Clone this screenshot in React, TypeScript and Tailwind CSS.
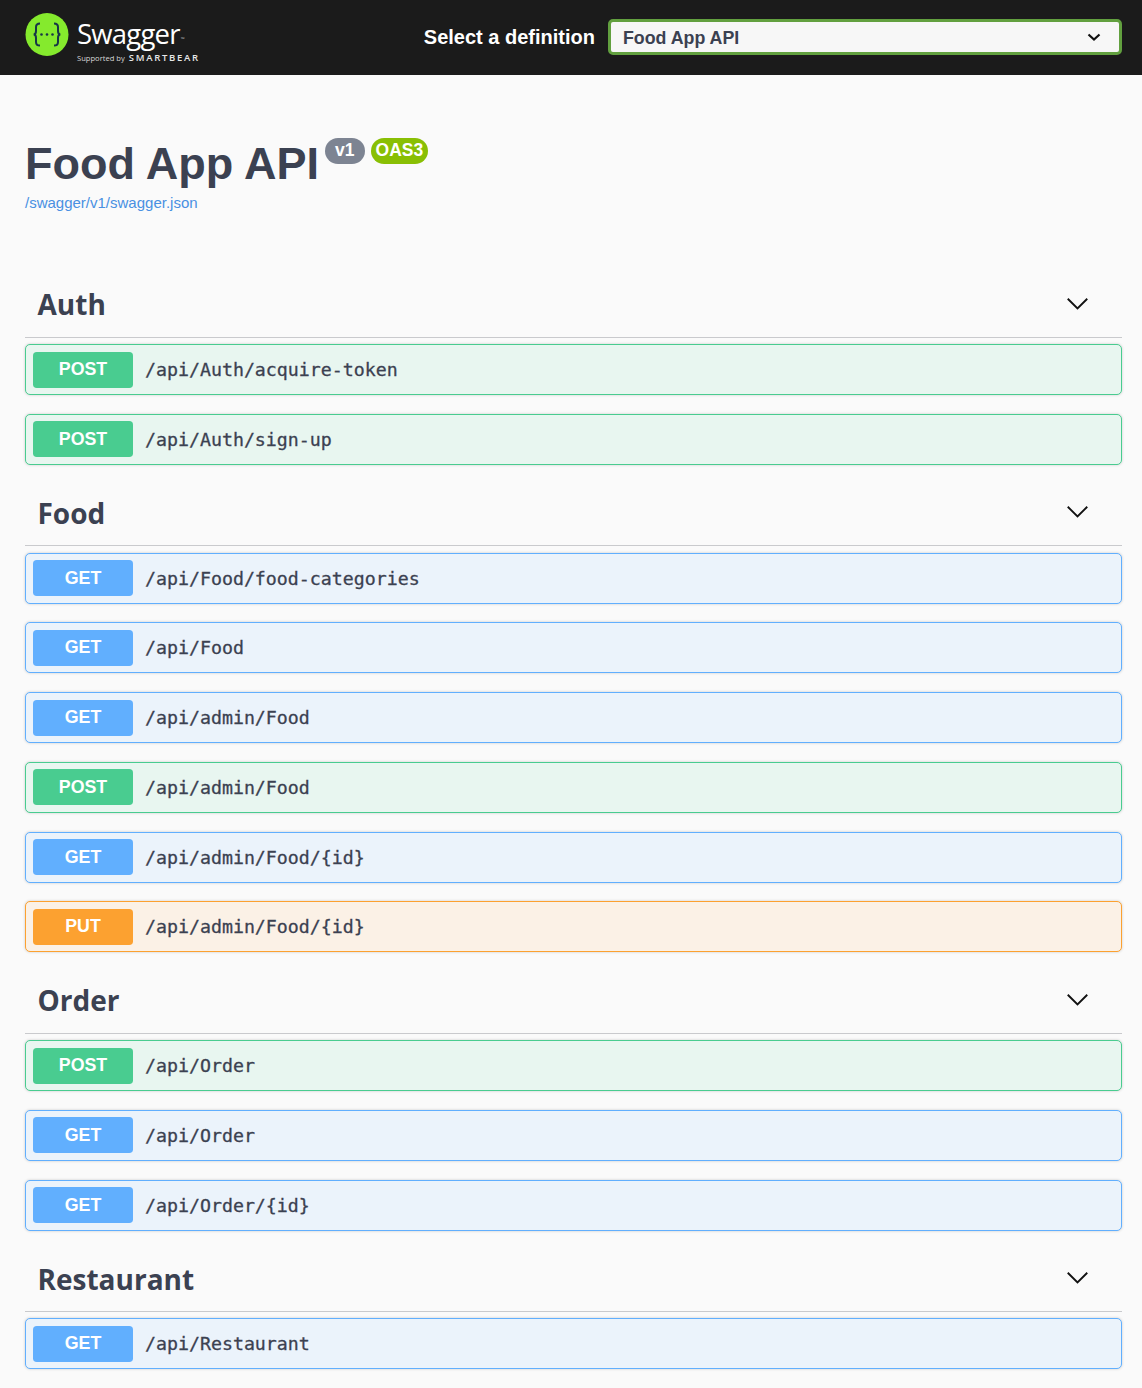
const sections = [
  {
    name: 'Auth',
    ops: [
      { method: 'POST', path: '/api/Auth/acquire-token' },
      { method: 'POST', path: '/api/Auth/sign-up' },
    ],
  },
  {
    name: 'Food',
    ops: [
      { method: 'GET', path: '/api/Food/food-categories' },
      { method: 'GET', path: '/api/Food' },
      { method: 'GET', path: '/api/admin/Food' },
      { method: 'POST', path: '/api/admin/Food' },
      { method: 'GET', path: '/api/admin/Food/{id}' },
      { method: 'PUT', path: '/api/admin/Food/{id}' },
    ],
  },
  {
    name: 'Order',
    ops: [
      { method: 'POST', path: '/api/Order' },
      { method: 'GET', path: '/api/Order' },
      { method: 'GET', path: '/api/Order/{id}' },
    ],
  },
  {
    name: 'Restaurant',
    ops: [{ method: 'GET', path: '/api/Restaurant' }],
  },
];

const methodStyles: Record<string, { row: string; badge: string }> = {
  GET: { row: 'bg-[#ebf3fb] border-[#61affe]', badge: 'bg-[#61affe]' },
  POST: { row: 'bg-[#e8f6f0] border-[#49cc90]', badge: 'bg-[#49cc90]' },
  PUT: { row: 'bg-[#fbf1e6] border-[#fca130]', badge: 'bg-[#fca130]' },
};

function Logo() {
  return (
    <div className="flex items-center">
      <svg width="44" height="44" viewBox="0 0 44 44" className="shrink-0 mb-[5px]">
        <circle cx="22" cy="21.500" r="21.500" fill="#85ea2d" />
        <path
          d="M15 10.500c-3 0-4 1.200-4 3.600v4c0 2-.8 3.400-2.400 3.400 1.600 0 2.400 1.400 2.400 3.400v4c0 2.400 1 3.600 4 3.600M29 10.500c3 0 4 1.200 4 3.600v4c0 2 .8 3.400 2.400 3.400-1.600 0-2.400 1.400-2.400 3.400v4c0 2.400-1 3.600-4 3.600"
          fill="none"
          stroke="#173647"
          strokeWidth="2"
        />
        <circle cx="16.500" cy="21.500" r="1.300" fill="#173647" />
        <circle cx="22" cy="21.500" r="1.300" fill="#173647" />
        <circle cx="27.500" cy="21.500" r="1.300" fill="#173647" />
      </svg>
      <div className="ml-[8px] flex flex-col text-white font-['Open_Sans',sans-serif]">
        <span className="flex items-end text-[27.500px] leading-[32px] font-normal tracking-[-0.8px] h-[34px] mt-[5px]">
          Swagger
          <span className="text-[5px] leading-[5px] tracking-normal ml-[1px] mb-[8px] text-[#bbbbbb]">™</span>
        </span>
        <span className="flex items-center h-[12px] mt-[3px] whitespace-nowrap">
          <span className="text-[7.600px] font-normal text-[#d8d8d8]">Supported by</span>
          <span className="ml-[4px] text-[9.500px] font-semibold tracking-[1.700px] text-[#e8e8e8]">SMARTBEAR</span>
        </span>
      </div>
    </div>
  );
}

function TopBar() {
  return (
    <header className="h-[75px] bg-[#1b1b1b] flex items-center pl-[25px] pr-[20px]">
      <Logo />
      <div className="flex items-center ml-auto mb-[1px]">
        <span className="text-[20px] font-bold text-white mr-[13px] whitespace-nowrap">Select a definition</span>
        <div className="w-[514px] h-[36px] bg-[#f7f7f7] border-[3px] border-[#62a03f] rounded-[5px] flex items-center justify-between pl-[12px] pr-[15px] text-[#3b4151] text-[17.800px] font-bold">
          <span className="mt-[2px]">Food App API</span>
          <svg width="20" height="20" viewBox="0 0 20 20" className="text-[#111]">
            <path d="M4.500 7.500l5.500 5 5.500-5" fill="none" stroke="currentColor" strokeWidth="2.200" />
          </svg>
        </div>
      </div>
    </header>
  );
}

function Operation({ method, path }: { method: string; path: string }) {
  const s = methodStyles[method];
  return (
    <div className={`h-[51px] mb-[18.750px] border rounded-[5px] flex items-center pl-[7px] shadow-[0_0_3px_rgba(0,0,0,0.19)] ${s.row}`}>
      <div className={`w-[100px] h-[36px] pb-[0.250px] rounded-[3.750px] flex items-center justify-center text-white text-[17.800px] font-bold ${s.badge}`}>
        {method}
      </div>
      <span className="ml-[12px] mt-[0.500px] text-[18.250px] text-[#3b4151] font-['DejaVu_Sans_Mono',monospace] [-webkit-text-stroke:0.3px_#3b4151]">{path}</span>
    </div>
  );
}

function Section({ name, ops }: { name: string; ops: { method: string; path: string }[] }) {
  return (
    <section>
      <div className="h-[62.800px] flex items-center justify-between border-b border-[#c9cacd] pl-[12.500px] pr-[32px] mb-[6.200px]">
        <h3 className="text-[28px] font-bold text-[#3b4151] font-['Open_Sans',sans-serif] mb-[3px]">{name}</h3>
        <svg width="25" height="25" viewBox="0 0 20 20" className="mb-[5px]">
          <path d="M2.200 6.200L10 14l7.800-7.800" fill="none" stroke="#111" strokeWidth="1.500" />
        </svg>
      </div>
      {ops.map((op, i) => (
        <Operation key={i} method={op.method} path={op.path} />
      ))}
    </section>
  );
}

export default function App() {
  return (
    <div className="h-[1388px] overflow-hidden bg-[#fafafa] font-['Liberation_Sans',Arial,sans-serif]">
      <TopBar />
      <main className="pr-[20px] pl-[25px]">
        <div className="pt-[61px] h-[200.100px]">
          <div className="flex items-start">
            <h1 className="text-[45px] leading-[56px] font-bold text-[#3b4151] whitespace-nowrap">Food App API</h1>
            <span className="ml-[6px] mt-[2px] h-[26px] px-[10px] rounded-[14px] bg-[#7d8492] text-white text-[17.500px] font-bold leading-[24px]">v1</span>
            <span className="ml-[6px] mt-[2px] h-[26px] px-[5px] rounded-[14px] bg-[#89bf04] text-white text-[17.500px] font-bold leading-[24px]">OAS3</span>
          </div>
          <a className="block text-[15px] text-[#4990e2]">/swagger/v1/swagger.json</a>
        </div>
        <div>
          {sections.map((s) => (
            <Section key={s.name} name={s.name} ops={s.ops} />
          ))}
        </div>
      </main>
    </div>
  );
}
